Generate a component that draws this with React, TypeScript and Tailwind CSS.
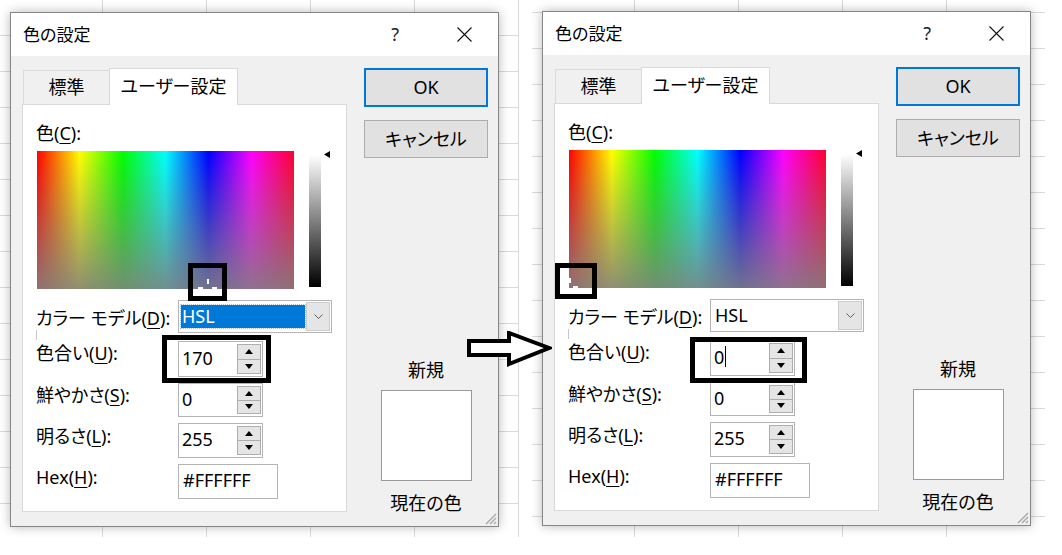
import React from "react";

type DialogProps = {
    hue: number;
    focusedModel: boolean;
    showCursor: boolean;
    specBox: string;
    hueBox: string;
};

function Underlined({ children }: { children: React.ReactNode }) {
    return <span className="underline decoration-1 underline-offset-[3px]">{children}</span>;
}

function SpinArrows() {
    return (
        <div className="mr-px my-[2px] w-[24px] self-stretch flex flex-col">
            <div className="flex-1 border border-[#adadad] bg-[#e5e5e5] flex items-center justify-center">
                <svg width="8" height="5" viewBox="0 0 8 5">
                    <path d="M0 5 L4 0 L8 5 Z" fill="#000" />
                </svg>
            </div>
            <div className="flex-1 border border-t-0 border-[#adadad] bg-[#e5e5e5] flex items-center justify-center">
                <svg width="8" height="5" viewBox="0 0 8 5">
                    <path d="M0 0 L8 0 L4 5 Z" fill="#000" />
                </svg>
            </div>
        </div>
    );
}

function SpinInput({ value, h, cursor }: { value: string; h: string; cursor?: boolean }) {
    return (
        <div className={`w-[85px] ${h} border border-[#b4b4b4] bg-white flex items-center`}>
            <div className="flex-1 pl-[3px] pb-[3px] flex items-center text-[18px] leading-[24px]">
                {value}
                {cursor && <span className="ml-px w-px h-[21px] bg-black" />}
            </div>
            <SpinArrows />
        </div>
    );
}

function Row({ label, mt, pt, children }: { label: React.ReactNode; mt: string; pt: string; children: React.ReactNode }) {
    return (
        <div className={`${mt} flex items-start`}>
            <div className={`w-[142px] ${pt} text-[18px] leading-[24px] whitespace-nowrap`}>{label}</div>
            {children}
        </div>
    );
}

function Dialog({ hue, focusedModel, showCursor, specBox, hueBox }: DialogProps) {
    const markX = Math.round((hue / 255) * 257);

    return (
        <div className="relative w-[489px] h-[515px] border border-[#858585] bg-[#f0f0f0] shadow-[0_0_10px_rgba(0,0,0,0.28)] flex flex-col">
            {/* タイトル */}
            <div className="h-[43px] bg-white flex items-center pl-[12px] pr-[26px]">
                <span className="text-[17px]">色の設定</span>
                <span className="ml-auto text-[18px] text-[#222]">?</span>
                <svg className="ml-[58px]" width="15" height="15" viewBox="0 0 15 15">
                    <path d="M0.5 0.5 L14.5 14.5 M14.5 0.5 L0.5 14.5" stroke="#111" strokeWidth="1.1" />
                </svg>
            </div>

            <div className="flex-1 flex pl-[11px] pr-[10px] pt-[12px]">
                {/* 左側 */}
                <div className="w-[325px] flex flex-col">
                    <div className="h-[36px] flex items-end relative z-10">
                        <div className="ml-px w-[86px] h-[34px] border-t border-l border-[#dadada] flex items-center justify-center text-[18px]">
                            標準
                        </div>
                        <div className="w-[129px] h-[37px] -mb-px bg-white border border-b-0 border-[#d9d9d9] flex items-center justify-center text-[18px] pb-[2px]">
                            ユーザー設定
                        </div>
                    </div>

                    <div className="h-[408px] bg-white border border-[#d9d9d9] pl-[13px] pt-[16px] flex flex-col">
                        <div className="text-[18px] leading-[24px]">
                            色(<Underlined>C</Underlined>):
                        </div>

                        <div className="mt-[6px] flex items-start">
                            <div className="relative ml-px w-[257px] h-[138px] bg-[linear-gradient(to_bottom,rgba(128,128,128,0),rgba(128,128,128,0.88)),linear-gradient(to_right,#ff0000,#ffff00,#00ff00,#00ffff,#0000ff,#ff00ff,#ff0030)]">
                                <span className="absolute top-[128px] w-[2px] h-[5px] bg-white" style={{ left: Math.max(markX - 1, 0) }} />
                                {markX > 10 && (
                                    <span className="absolute top-[136px] w-[5px] h-[2px] bg-white" style={{ left: markX - 10 }} />
                                )}
                                <span className="absolute top-[136px] w-[5px] h-[2px] bg-white" style={{ left: markX + 4 }} />
                            </div>
                            <div className="ml-[15px] mt-[4px] w-[12px] h-[132px] bg-[linear-gradient(to_bottom,#ffffff,#000000)]" />
                            <svg className="ml-[3px]" width="6" height="7" viewBox="0 0 6 7">
                                <path d="M0 3.5 L6 0 L6 7 Z" fill="#000" />
                            </svg>
                        </div>

                        <div className="relative">
                            <Row
                                mt="mt-[11px]"
                                pt="pt-[6px]"
                                label={
                                    <>
                                        カラー モデル(<Underlined>D</Underlined>):
                                    </>
                                }
                            >
                                <div className="w-[154px] h-[33px] border border-[#b4b4b4] bg-white flex items-center">
                                    {focusedModel ? (
                                        <div className="ml-[2px] w-[124px] h-[23px] bg-[#0078d7] outline outline-1 outline-dotted outline-[#9fc6ea] flex items-center pl-[1px] text-white text-[18px]">
                                            HSL
                                        </div>
                                    ) : (
                                        <div className="pl-[4px] text-[18px]">HSL</div>
                                    )}
                                    <div className="ml-auto mr-px my-px self-stretch w-[24px] bg-[#e5e5e5] border border-[#cccccc] flex items-center justify-center">
                                        <svg width="9" height="5" viewBox="0 0 9 5">
                                            <path d="M0.5 0.5 L4.5 4.5 L8.5 0.5" fill="none" stroke="#606060" strokeWidth="1" />
                                        </svg>
                                    </div>
                                </div>
                            </Row>
                            <span className="absolute left-0 top-[41px] w-px h-[10px] bg-[#c8c8c8]" />
                        </div>

                        <Row
                            mt="mt-[8px]"
                            pt="pt-0"
                            label={
                                <>
                                    色合い(<Underlined>U</Underlined>):
                                </>
                            }
                        >
                            <SpinInput value={String(hue)} h="h-[36px]" cursor={showCursor} />
                        </Row>

                        <Row
                            mt="mt-[6px]"
                            pt="pt-0"
                            label={
                                <>
                                    鮮やかさ(<Underlined>S</Underlined>):
                                </>
                            }
                        >
                            <SpinInput value="0" h="h-[34px]" />
                        </Row>

                        <Row
                            mt="mt-[6px]"
                            pt="pt-px"
                            label={
                                <>
                                    明るさ(<Underlined>L</Underlined>):
                                </>
                            }
                        >
                            <SpinInput value="255" h="h-[35px]" />
                        </Row>

                        <Row
                            mt="mt-[6px]"
                            pt="pt-px"
                            label={
                                <>
                                    Hex(<Underlined>H</Underlined>):
                                </>
                            }
                        >
                            <div className="w-[100px] h-[35px] border border-[#b4b4b4] bg-white flex items-center pl-[4px] pb-[3px] text-[18px]">
                                #FFFFFF
                            </div>
                        </Row>
                    </div>
                </div>

                {/* 右側 */}
                <div className="ml-[17px] w-[124px] flex flex-col items-center">
                    <div className="w-full h-[39px] border-2 border-[#0078d7] bg-[#e1e1e1] flex items-center justify-center text-[18px]">
                        OK
                    </div>
                    <div className="mt-[13px] w-full h-[38px] border border-[#adadad] bg-[#e1e1e1] flex items-center justify-center text-[18px]">
                        キャンセル
                    </div>
                    <div className="mt-[200px] text-[18px] leading-[24px]">新規</div>
                    <div className="mt-[8px] w-[91px] h-[91px] bg-white border border-[#9a9a9a]" />
                    <div className="mt-[10px] text-[18px] leading-[24px]">現在の色</div>
                </div>
            </div>

            {/* サイズ変更グリップ */}
            <svg className="absolute right-px bottom-px" width="13" height="13" viewBox="0 0 13 13">
                <path d="M12 2 L2 12 M12 6 L6 12 M12 10 L10 12" stroke="#a8a8a8" strokeWidth="1.4" />
            </svg>

            {/* 注釈の枠 */}
            <div className={`absolute border-[5px] border-black ${specBox}`} />
            <div className={`absolute border-[5px] border-black ${hueBox}`} />
        </div>
    );
}

export default function App() {
    return (
        <div className="relative w-[1062px] h-[555px] bg-white flex text-black font-['Noto_Sans','Noto_Sans_CJK_JP',sans-serif] [font-feature-settings:'palt'] overflow-hidden">
            <div className="w-[519px] h-[537px] pl-[10px] pt-[12px] bg-[linear-gradient(to_right,#dadada_1px,transparent_1px),linear-gradient(to_bottom,#dadada_1px,transparent_1px)] bg-size-[104px_36px] bg-position-[102px_35px]">
                <Dialog
                    hue={170}
                    focusedModel
                    showCursor={false}
                    specBox="left-[177px] top-[250px] w-[39px] h-[38px]"
                    hueBox="left-[151px] top-[322px] w-[109px] h-[48px]"
                />
            </div>
            <div className="ml-[13px] w-[513px] h-[537px] pl-[10px] pt-[11px] bg-[linear-gradient(to_right,#dadada_1px,transparent_1px),linear-gradient(to_bottom,#dadada_1px,transparent_1px)] bg-size-[104px_36px] bg-position-[102px_12px]">
                <Dialog
                    hue={0}
                    focusedModel={false}
                    showCursor
                    specBox="left-[12px] top-[251px] w-[42px] h-[36px]"
                    hueBox="left-[147px] top-[325px] w-[117px] h-[46px]"
                />
            </div>

            {/* 矢印 */}
            <svg className="absolute left-[466px] top-[331px]" width="86" height="36" viewBox="0 0 86 36">
                <path d="M3 10 L43 10 L43 2 L83 17 L43 33 L43 24 L3 24 Z" fill="#fff" stroke="#000" strokeWidth="4" strokeLinejoin="miter" />
            </svg>
        </div>
    );
}
